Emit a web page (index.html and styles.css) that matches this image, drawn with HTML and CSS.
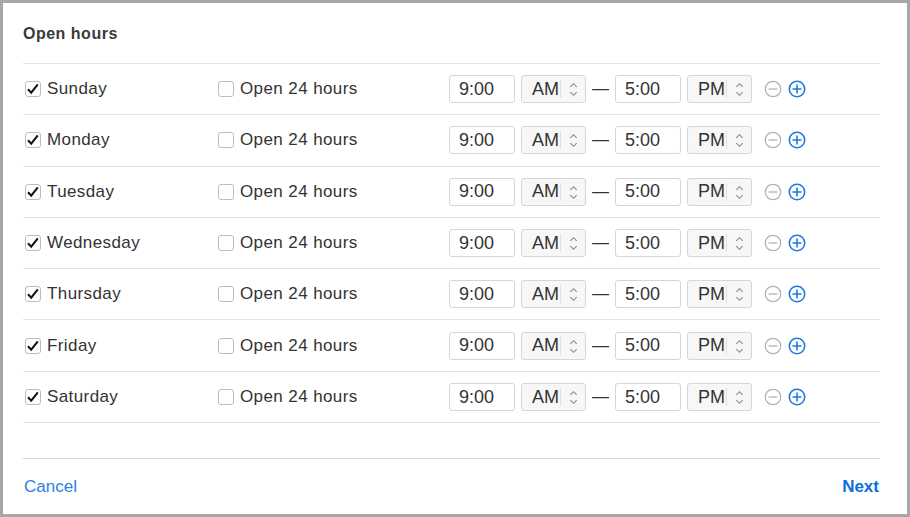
FILE: index.html
```html
<!DOCTYPE html>
<html>
<head>
    <title>Open hours</title>
    <link rel="stylesheet" href="styles.css">
</head>
<body>
<div class="dialog">
    <div class="header">Open hours</div>

    <div class="rows">
        <div class="row">
            <label class="check"><span class="box on"><svg viewBox="0 0 16 16"><path d="M3 8.3l3.2 3.4 6.6-8.4"/></svg></span>Sunday</label>
            <label class="check"><span class="box"></span>Open 24 hours</label>
            <div class="times">
                <span class="time">9:00</span>
                <span class="ampm">AM<i class="arrows"><svg viewBox="0 0 8 16"><path d="M1 5.5l3-3 3 3M1 10.5l3 3 3-3"/></svg></i></span>
                <span class="dash">—</span>
                <span class="time">5:00</span>
                <span class="ampm">PM<i class="arrows"><svg viewBox="0 0 8 16"><path d="M1 5.5l3-3 3 3M1 10.5l3 3 3-3"/></svg></i></span>
                <svg class="circle minus" viewBox="0 0 18 18"><circle cx="9" cy="9" r="7.7"/><path d="M4.5 9h9"/></svg>
                <svg class="circle plus" viewBox="0 0 18 18"><circle cx="9" cy="9" r="7.7"/><path d="M4.5 9h9M9 4.5v9"/></svg>
            </div>
        </div>
        <div class="row">
            <label class="check"><span class="box on"><svg viewBox="0 0 16 16"><path d="M3 8.3l3.2 3.4 6.6-8.4"/></svg></span>Monday</label>
            <label class="check"><span class="box"></span>Open 24 hours</label>
            <div class="times">
                <span class="time">9:00</span>
                <span class="ampm">AM<i class="arrows"><svg viewBox="0 0 8 16"><path d="M1 5.5l3-3 3 3M1 10.5l3 3 3-3"/></svg></i></span>
                <span class="dash">—</span>
                <span class="time">5:00</span>
                <span class="ampm">PM<i class="arrows"><svg viewBox="0 0 8 16"><path d="M1 5.5l3-3 3 3M1 10.5l3 3 3-3"/></svg></i></span>
                <svg class="circle minus" viewBox="0 0 18 18"><circle cx="9" cy="9" r="7.7"/><path d="M4.5 9h9"/></svg>
                <svg class="circle plus" viewBox="0 0 18 18"><circle cx="9" cy="9" r="7.7"/><path d="M4.5 9h9M9 4.5v9"/></svg>
            </div>
        </div>
        <div class="row">
            <label class="check"><span class="box on"><svg viewBox="0 0 16 16"><path d="M3 8.3l3.2 3.4 6.6-8.4"/></svg></span>Tuesday</label>
            <label class="check"><span class="box"></span>Open 24 hours</label>
            <div class="times">
                <span class="time">9:00</span>
                <span class="ampm">AM<i class="arrows"><svg viewBox="0 0 8 16"><path d="M1 5.5l3-3 3 3M1 10.5l3 3 3-3"/></svg></i></span>
                <span class="dash">—</span>
                <span class="time">5:00</span>
                <span class="ampm">PM<i class="arrows"><svg viewBox="0 0 8 16"><path d="M1 5.5l3-3 3 3M1 10.5l3 3 3-3"/></svg></i></span>
                <svg class="circle minus" viewBox="0 0 18 18"><circle cx="9" cy="9" r="7.7"/><path d="M4.5 9h9"/></svg>
                <svg class="circle plus" viewBox="0 0 18 18"><circle cx="9" cy="9" r="7.7"/><path d="M4.5 9h9M9 4.5v9"/></svg>
            </div>
        </div>
        <div class="row">
            <label class="check"><span class="box on"><svg viewBox="0 0 16 16"><path d="M3 8.3l3.2 3.4 6.6-8.4"/></svg></span>Wednesday</label>
            <label class="check"><span class="box"></span>Open 24 hours</label>
            <div class="times">
                <span class="time">9:00</span>
                <span class="ampm">AM<i class="arrows"><svg viewBox="0 0 8 16"><path d="M1 5.5l3-3 3 3M1 10.5l3 3 3-3"/></svg></i></span>
                <span class="dash">—</span>
                <span class="time">5:00</span>
                <span class="ampm">PM<i class="arrows"><svg viewBox="0 0 8 16"><path d="M1 5.5l3-3 3 3M1 10.5l3 3 3-3"/></svg></i></span>
                <svg class="circle minus" viewBox="0 0 18 18"><circle cx="9" cy="9" r="7.7"/><path d="M4.5 9h9"/></svg>
                <svg class="circle plus" viewBox="0 0 18 18"><circle cx="9" cy="9" r="7.7"/><path d="M4.5 9h9M9 4.5v9"/></svg>
            </div>
        </div>
        <div class="row">
            <label class="check"><span class="box on"><svg viewBox="0 0 16 16"><path d="M3 8.3l3.2 3.4 6.6-8.4"/></svg></span>Thursday</label>
            <label class="check"><span class="box"></span>Open 24 hours</label>
            <div class="times">
                <span class="time">9:00</span>
                <span class="ampm">AM<i class="arrows"><svg viewBox="0 0 8 16"><path d="M1 5.5l3-3 3 3M1 10.5l3 3 3-3"/></svg></i></span>
                <span class="dash">—</span>
                <span class="time">5:00</span>
                <span class="ampm">PM<i class="arrows"><svg viewBox="0 0 8 16"><path d="M1 5.5l3-3 3 3M1 10.5l3 3 3-3"/></svg></i></span>
                <svg class="circle minus" viewBox="0 0 18 18"><circle cx="9" cy="9" r="7.7"/><path d="M4.5 9h9"/></svg>
                <svg class="circle plus" viewBox="0 0 18 18"><circle cx="9" cy="9" r="7.7"/><path d="M4.5 9h9M9 4.5v9"/></svg>
            </div>
        </div>
        <div class="row">
            <label class="check"><span class="box on"><svg viewBox="0 0 16 16"><path d="M3 8.3l3.2 3.4 6.6-8.4"/></svg></span>Friday</label>
            <label class="check"><span class="box"></span>Open 24 hours</label>
            <div class="times">
                <span class="time">9:00</span>
                <span class="ampm">AM<i class="arrows"><svg viewBox="0 0 8 16"><path d="M1 5.5l3-3 3 3M1 10.5l3 3 3-3"/></svg></i></span>
                <span class="dash">—</span>
                <span class="time">5:00</span>
                <span class="ampm">PM<i class="arrows"><svg viewBox="0 0 8 16"><path d="M1 5.5l3-3 3 3M1 10.5l3 3 3-3"/></svg></i></span>
                <svg class="circle minus" viewBox="0 0 18 18"><circle cx="9" cy="9" r="7.7"/><path d="M4.5 9h9"/></svg>
                <svg class="circle plus" viewBox="0 0 18 18"><circle cx="9" cy="9" r="7.7"/><path d="M4.5 9h9M9 4.5v9"/></svg>
            </div>
        </div>
        <div class="row">
            <label class="check"><span class="box on"><svg viewBox="0 0 16 16"><path d="M3 8.3l3.2 3.4 6.6-8.4"/></svg></span>Saturday</label>
            <label class="check"><span class="box"></span>Open 24 hours</label>
            <div class="times">
                <span class="time">9:00</span>
                <span class="ampm">AM<i class="arrows"><svg viewBox="0 0 8 16"><path d="M1 5.5l3-3 3 3M1 10.5l3 3 3-3"/></svg></i></span>
                <span class="dash">—</span>
                <span class="time">5:00</span>
                <span class="ampm">PM<i class="arrows"><svg viewBox="0 0 8 16"><path d="M1 5.5l3-3 3 3M1 10.5l3 3 3-3"/></svg></i></span>
                <svg class="circle minus" viewBox="0 0 18 18"><circle cx="9" cy="9" r="7.7"/><path d="M4.5 9h9"/></svg>
                <svg class="circle plus" viewBox="0 0 18 18"><circle cx="9" cy="9" r="7.7"/><path d="M4.5 9h9M9 4.5v9"/></svg>
            </div>
        </div>
    </div>

    <div class="footer">
        <a class="cancel">Cancel</a>
        <a class="next">Next</a>
    </div>
</div>
</body>
</html>
```

FILE: styles.css
```css
html, body { margin: 0; padding: 0; }
body { font-family: "Liberation Sans", Arial, sans-serif; color: #333; background: #fff; }

.dialog { box-sizing: border-box; width: 910px; height: 517px; border: 3px solid #a7a7a7; padding: 0 27px 0 20px; display: flex; flex-direction: column; }

.header { height: 59px; padding-top: 1px; display: flex; align-items: center; font-size: 16px; font-weight: bold; letter-spacing: 0.5px; color: #3a3a3a; border-bottom: 1px solid #e4e4e4; }

.rows { height: 358px; border-bottom: 1px solid #e4e4e4; }
.row { box-sizing: border-box; height: 51.3px; border-bottom: 1px solid #e4e4e4; display: grid; grid-template-columns: 195px 231px auto; align-items: center; font-size: 17px; letter-spacing: 0.4px; }
.row:last-child { border-bottom: none; }

.check { display: flex; align-items: center; gap: 6px; }
.check:first-child { padding-left: 2px; }
.box { box-sizing: border-box; width: 16px; height: 16px; border: 1px solid #bdbdbd; border-radius: 3px; background: #fff; }
.box svg { display: block; width: 16px; height: 16px; margin: -1px 0 0 -1px; fill: none; stroke: #111; stroke-width: 2; }

.times { display: flex; align-items: center; }
.time, .ampm { box-sizing: border-box; height: 28px; border: 1px solid #d6d6d6; border-radius: 3px; display: flex; align-items: center; letter-spacing: 0; font-size: 18px; }
.time { width: 66px; padding-left: 9px; background: #fff; }
.ampm { width: 65px; padding-left: 10px; margin-left: 6px; background: #f7f7f7; position: relative; }
.arrows { position: absolute; right: 7px; top: 4px; height: 18px; padding-left: 8px; border-left: 1px solid #e0e0e0; }
.arrows svg { display: block; width: 9px; height: 17px; margin-top: 1px; fill: none; stroke: #888; stroke-width: 1; }
.dash { width: 29px; text-align: center; font-size: 17px; letter-spacing: 0; }

.circle { width: 18px; height: 18px; fill: none; stroke-width: 1.3; }
.minus { margin-left: 12px; stroke: #b3b3b3; }
.plus { margin-left: 6px; stroke: #1f7ae0; stroke-width: 1.6; }

.footer { margin-top: 35px; border-top: 1px solid #d3d3d3; flex: 1; display: flex; align-items: center; justify-content: space-between; padding: 1px 1px 0 1px; font-size: 17px; }
.cancel { color: #2b80e3; }
.next { color: #0a6fd6; font-weight: bold; }
```
